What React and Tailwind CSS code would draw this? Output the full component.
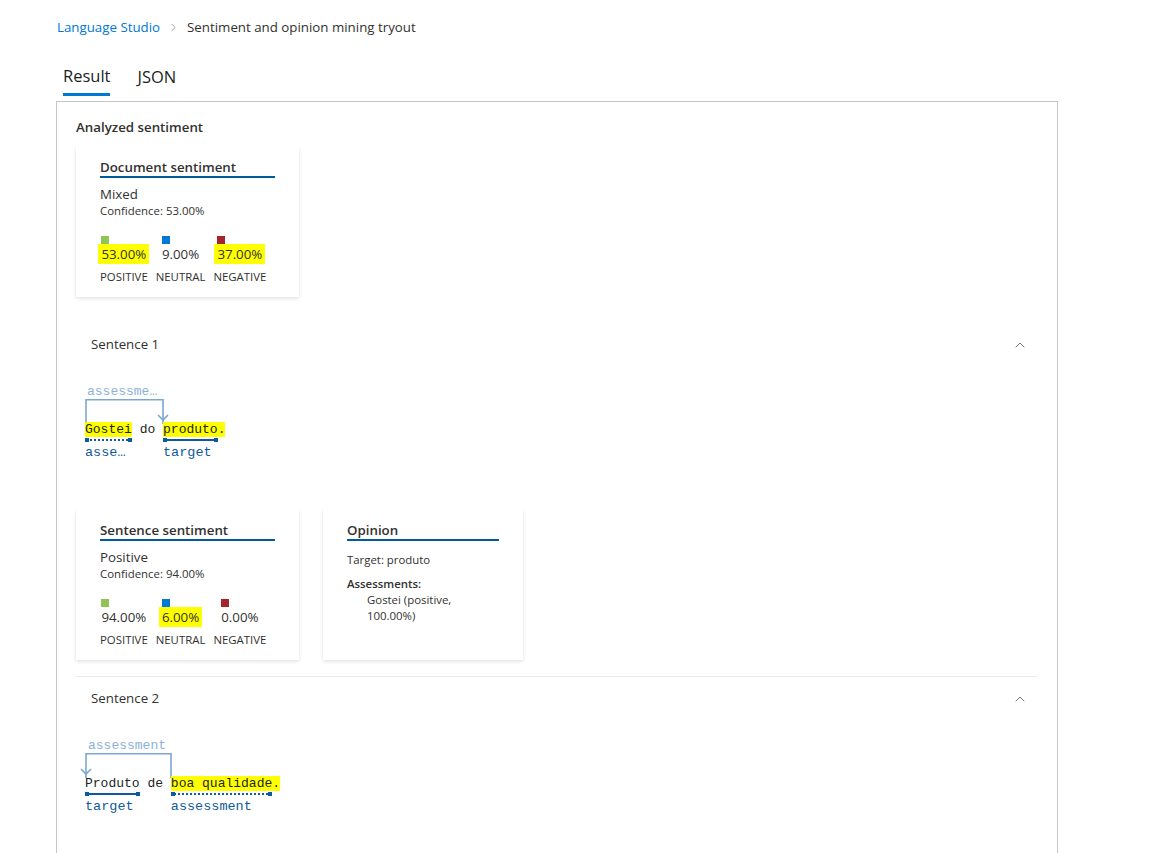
import React from 'react'
import { ChevronRight, ChevronUp } from 'lucide-react'

const mono = "font-['Liberation_Mono','DejaVu_Sans_Mono',monospace]"

function Scores({ scores }) {
  return (
    <div className="mt-[17px] flex gap-2">
      {scores.map((s) => (
        <div key={s.label} className="flex flex-col items-center">
          <div className="flex flex-col items-start">
            <div className={`w-2 h-2 ${s.color}`} />
            <div
              className={`text-[13.3px] leading-[20px] text-[#323130] ${
                s.mark ? 'bg-[#ffff00] px-[3px] -mx-[3px]' : ''
              }`}
            >
              {s.value}
            </div>
          </div>
          <div className="mt-[5px] text-[11.4px] leading-[16px] text-[#323130] uppercase">
            {s.label}
          </div>
        </div>
      ))}
    </div>
  )
}

function Card({ title, width, children }) {
  return (
    <div
      className={`${width} bg-white px-6 pt-[12px] pb-[11px] shadow-[0_1.6px_3.6px_rgba(0,0,0,0.13),0_0.3px_0.9px_rgba(0,0,0,0.11)]`}
    >
      <div className="text-[13.3px] leading-[18px] font-semibold text-[#323130] border-b-2 border-[#005a9e]">
        {title}
      </div>
      {children}
    </div>
  )
}

function SentimentCard({ title, label, confidence, scores }) {
  return (
    <Card title={title} width="w-[223px] h-[151px]">
      <div className="mt-[7px] text-[13.3px] leading-[18px] text-[#323130]">{label}</div>
      <div className="text-[11.4px] leading-[16px] text-[#323130]">
        Confidence: {confidence}
      </div>
      <Scores scores={scores} />
    </Card>
  )
}

function SentenceHeader({ title }) {
  return (
    <div className="h-[44px] flex items-center justify-between pl-[15px] pr-[9px]">
      <span className="text-[13.3px] text-[#323130]">{title}</span>
      <ChevronUp size={16} strokeWidth={1.3} className="text-[#605e5c]" />
    </div>
  )
}

// one arc between two words, drawn above the text line
function Annotation({ topLabel, labelLeft, arc, words, bottomLabels }) {
  const { from, to, arrowLeft } = arc
  const left = Math.min(from, to)
  const right = Math.max(from, to)
  return (
    <div className={`pt-[18px] pl-[9px] ${mono}`}>
      <div
        className="h-[14px] leading-[14px] text-[13px] text-[#8cb2d8] whitespace-pre"
        style={{ paddingLeft: labelLeft }}
      >
        {topLabel}
      </div>
      <svg width="200" height="23" className="block overflow-visible -ml-[9px]">
        <g stroke="#7ba7d2" strokeWidth="1.6" fill="none">
          <path d={`M${left} 25 V0.8 H${right} V25`} />
          <path
            d={
              arrowLeft
                ? `M${left - 5} 16 L${left} 21 L${left + 5} 16`
                : `M${right - 5} 16 L${right} 21 L${right + 5} 16`
            }
          />
        </g>
      </svg>
      <div className="h-4 leading-4 text-[13px] text-[#201f1e] whitespace-pre">
        {words.map((w, i) => (
          <span key={i} className={w.mark ? 'bg-[#ffff00]' : ''}>
            {w.text}
          </span>
        ))}
      </div>
      <div className="h-[6px] text-[13px] flex whitespace-pre">
        {words.map((w, i) =>
          w.line ? (
            <span
              key={i}
              className="relative inline-block h-[6px]"
              style={{ width: `${w.lineCh}ch` }}
            >
              <span
                className={`absolute left-0 right-0 top-[1px] ${
                  w.line === 'dot'
                    ? 'border-t-2 border-dotted border-[#0f5a9c]'
                    : 'border-t-2 border-[#0f5a9c]'
                }`}
              />
              <span className="absolute left-0 top-0 w-1 h-1 bg-[#0f5a9c]" />
              <span className="absolute right-0 top-0 w-1 h-1 bg-[#0f5a9c]" />
              <span className="invisible">{' '.repeat(w.lineCh)}</span>
            </span>
          ) : (
            <span key={i} className="inline-block" style={{ width: `${w.text.length}ch` }} />
          )
        )}
      </div>
      <div className="mt-[1px] h-4 leading-4 text-[13.5px] text-[#0f5a9c] flex whitespace-pre">
        {bottomLabels.map((b, i) => (
          <span key={i} className="inline-block" style={{ width: `${b.ch * 7.8}px` }}>
            {b.text}
          </span>
        ))}
      </div>
    </div>
  )
}

export default function App() {
  return (
    <div className="w-[1150px] h-[853px] overflow-hidden bg-white font-['Open_Sans','Noto_Sans',sans-serif] text-[#323130]">
      <div className="pl-[56px]">
        <div className="pt-[17px] h-[37px] flex items-center text-[13.3px] leading-[20px]">
          <span className="pl-[1px] text-[#0078d4]">Language Studio</span>
          <ChevronRight size={13} strokeWidth={1.3} className="mx-[7px] text-[#8a8886]" />
          <span className="text-[#323130]">Sentiment and opinion mining tryout</span>
        </div>
        <div className="mt-[19px] flex pl-[7px] gap-[27px] h-[40px]">
          <div className="h-full flex items-center text-[16.5px] text-[#201f1e] border-b-[3px] border-[#0078d4] pt-[3px]">
            Result
          </div>
          <div className="h-full flex items-center text-[16.5px] text-[#201f1e] pt-[3px]">
            JSON
          </div>
        </div>
        <div className="mt-[5px] w-[1002px] h-[800px] border border-[#c8c6c4] pl-[19px] pr-5 pt-[15px]">
          <div className="text-[13.3px] leading-[20px] font-semibold text-[#323130]">
            Analyzed sentiment
          </div>
          <div className="mt-[9px]">
            <SentimentCard
              title="Document sentiment"
              label="Mixed"
              confidence="53.00%"
              scores={[
                { label: 'Positive', value: '53.00%', color: 'bg-[#92c353]', mark: true },
                { label: 'Neutral', value: '9.00%', color: 'bg-[#0078d4]' },
                { label: 'Negative', value: '37.00%', color: 'bg-[#a4262c]', mark: true },
              ]}
            />
          </div>

          <div className="mt-[26px]">
            <SentenceHeader title="Sentence 1" />
            <Annotation
              topLabel="assessme…"
              labelLeft="2px"
              arc={{ from: 10, to: 87, arrowLeft: false }}
              words={[
                { text: 'Gostei', mark: true, line: 'dot', lineCh: 6 },
                { text: ' ' },
                { text: 'do ' },
                { text: 'produto.', mark: true, line: 'solid', lineCh: 7 },
              ]}
              bottomLabels={[
                { text: 'asse…', ch: 10 },
                { text: 'target', ch: 8 },
              ]}
            />
            <div className="mt-[48px] flex gap-6">
              <SentimentCard
                title="Sentence sentiment"
                label="Positive"
                confidence="94.00%"
                scores={[
                  { label: 'Positive', value: '94.00%', color: 'bg-[#92c353]' },
                  { label: 'Neutral', value: '6.00%', color: 'bg-[#0078d4]', mark: true },
                  { label: 'Negative', value: '0.00%', color: 'bg-[#a4262c]' },
                ]}
              />
              <Card title="Opinion" width="w-[200px] h-[151px]">
                <div className="mt-[11px] text-[11.4px] leading-[16px]">Target: produto</div>
                <div className="mt-[8px] text-[11.4px] leading-[16px] font-semibold">
                  Assessments:
                </div>
                <div className="pl-5 text-[11.4px] leading-[16px]">
                  Gostei (positive,
                  <br />
                  100.00%)
                </div>
              </Card>
            </div>
          </div>

          <div className="mt-[16px] border-t border-[#edebe9]">
            <SentenceHeader title="Sentence 2" />
            <Annotation
              topLabel="assessment"
              labelLeft="3px"
              arc={{ from: 95, to: 10, arrowLeft: true }}
              words={[
                { text: 'Produto', line: 'solid', lineCh: 7 },
                { text: ' de ' },
                { text: 'boa qualidade.', mark: true, line: 'dot', lineCh: 13 },
              ]}
              bottomLabels={[
                { text: 'target', ch: 11 },
                { text: 'assessment', ch: 10 },
              ]}
            />
          </div>
        </div>
      </div>
    </div>
  )
}
